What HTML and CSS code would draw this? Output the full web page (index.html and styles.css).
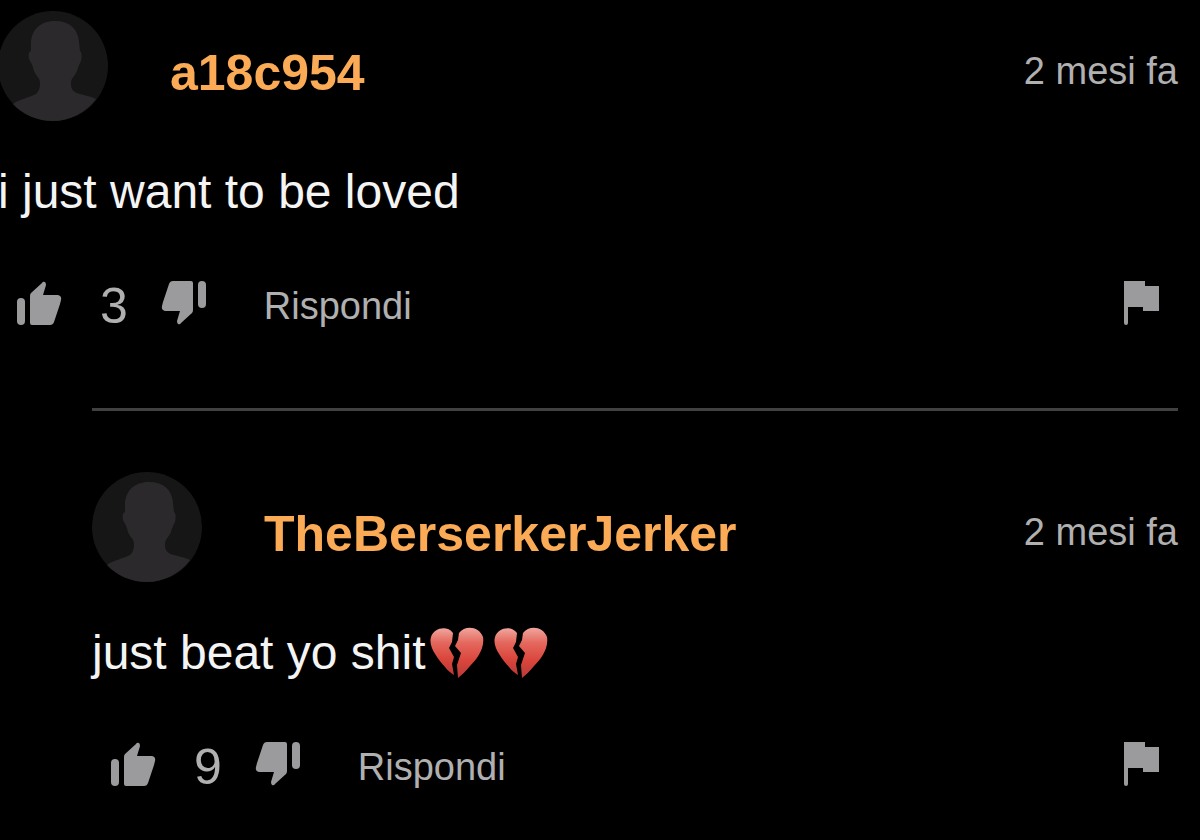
FILE: index.html
```html
<!DOCTYPE html>
<html lang="it">
<head>
    <meta charset="UTF-8">
    <meta name="viewport" content="width=device-width, initial-scale=1.0">
    <title>Commenti</title>
    <link rel="stylesheet" href="styles.css">
</head>
<body>
    <!-- Shared icons -->
    <svg class="sprite" aria-hidden="true">
        <defs>
            <symbol id="avatar" viewBox="0 0 110 110">
                <circle class="avatar-bg" cx="55" cy="55" r="55"/>
                <path class="avatar-figure" d="M57 10C42 10 34 19 33 31L33 40C30 41 30 46 32 50C34 53 35 56 36 60C38 65 42 67 42 72C42 77 41 80 38 83C31 87 21 88 15 93C25 104 40 110 55 110C71 110 88 102 98 88C92 85 84 84 79 82C74 80 73 77 73 72C73 67 77 65 79 60C80 56 81 54 83 50C84 46 84 41 82 40L81 31C80 18 72 10 57 10Z"/>
            </symbol>
            <symbol id="thumb" viewBox="0 0 46 46">
                <rect x="1" y="18" width="8" height="27" rx="4"/>
                <path d="M14 16Q14 14 15 13L26 3Q27 1 29 2Q30 3 30 5L27 15H42Q46 16 45 20L44 24L38 42Q37 45 34 45H16Q14 45 14 43Z"/>
            </symbol>
            <symbol id="flag" viewBox="0 0 36 46">
                <path d="M0 1H21V6H35V31H19V27H4V43Q4 45 2 45Q0 45 0 43Z"/>
            </symbol>
            <linearGradient id="heartFill" x1="0" y1="0" x2="0" y2="1">
                <stop offset="0" stop-color="#f0a69e"/>
                <stop offset="0.3" stop-color="#e4685e"/>
                <stop offset="0.65" stop-color="#da463c"/>
                <stop offset="1" stop-color="#b83a37"/>
            </linearGradient>
            <symbol id="heart" viewBox="0 0 54 52">
                <path fill="url(#heartFill)" d="M23 6C17-2 4 1 1 10C-2 20 8 32 15 40C18 44 21 46 24 48L22 37L24 30L19 21L22 15Z"/>
                <path fill="url(#heartFill)" d="M29 6C35-2 49-1 53 10C55 22 46 33 40 39C36 44 32 48 28 51L27 38L31 26L25 19L28 13Z"/>
            </symbol>
        </defs>
    </svg>

    <main class="thread">
        <article class="comment">
            <header class="comment-header">
                <svg class="avatar" aria-hidden="true"><use href="#avatar"/></svg>
                <a class="username" href="#">a18c954</a>
                <time class="date">2 mesi fa</time>
            </header>
            <p class="message">i just want to be loved</p>
            <div class="actions">
                <button type="button" aria-label="Mi piace"><svg class="icon"><use href="#thumb"/></svg></button>
                <span class="votes">3</span>
                <button type="button" aria-label="Non mi piace"><svg class="icon icon-down"><use href="#thumb"/></svg></button>
                <button type="button" class="reply-button">Rispondi</button>
                <button type="button" class="report" aria-label="Segnala"><svg class="icon icon-flag"><use href="#flag"/></svg></button>
            </div>
        </article>

        <article class="comment reply">
            <header class="comment-header">
                <svg class="avatar" aria-hidden="true"><use href="#avatar"/></svg>
                <a class="username" href="#">TheBerserkerJerker</a>
                <time class="date">2 mesi fa</time>
            </header>
            <p class="message">just beat yo shit<span class="hearts" role="img" aria-label="cuori spezzati"><svg class="heart"><use href="#heart"/></svg><svg class="heart"><use href="#heart"/></svg></span></p>
            <div class="actions">
                <button type="button" aria-label="Mi piace"><svg class="icon"><use href="#thumb"/></svg></button>
                <span class="votes">9</span>
                <button type="button" aria-label="Non mi piace"><svg class="icon icon-down"><use href="#thumb"/></svg></button>
                <button type="button" class="reply-button">Rispondi</button>
                <button type="button" class="report" aria-label="Segnala"><svg class="icon icon-flag"><use href="#flag"/></svg></button>
            </div>
        </article>
    </main>
</body>
</html>
```

FILE: styles.css
```css
:root {
    --background: #000000;
    --name: #fbab55;
    --text: #f4f4f4;
    --muted: #b0b0b0;
    --icon: #9b9b9d;
    --line: #414141;
}

body {
    margin: 0;
    background: var(--background);
    color: var(--text);
    font-family: "Liberation Sans", Arial, sans-serif;
}

.sprite {
    position: absolute;
    width: 0;
    height: 0;
}

/* Thread */
.thread {
    margin-left: -2px;
    padding: 11px 22px 0 0;
}

.reply {
    margin: 73px 0 0 94px;
    padding-top: 61px;
    border-top: 3px solid var(--line);
}

/* Comment header */
.comment-header {
    display: flex;
    align-items: center;
}

.avatar {
    flex: none;
    width: 110px;
    height: 110px;
}

.avatar-bg {
    fill: #161616;
}

.avatar-figure {
    fill: #2b292c;
}

.username {
    margin-left: 62px;
    padding-top: 14px;
    color: var(--name);
    font-size: 50px;
    font-weight: bold;
    line-height: 58px;
    text-decoration: none;
}

.date {
    margin-left: auto;
    padding-top: 10px;
    color: var(--muted);
    font-size: 38px;
    line-height: 44px;
}

/* Message */
.message {
    display: flex;
    align-items: center;
    margin: 43px 0 0;
    font-size: 48px;
    line-height: 56px;
}

.hearts {
    display: flex;
    gap: 10px;
    margin-left: 4px;
}

.heart {
    width: 54px;
    height: 52px;
}

/* Actions */
.actions {
    display: flex;
    align-items: center;
    height: 58px;
    margin-top: 57px;
    padding-left: 18px;
}

button {
    display: flex;
    padding: 0;
    border: none;
    background: none;
    color: var(--muted);
    font-family: inherit;
    cursor: pointer;
}

.icon {
    width: 46px;
    height: 46px;
    margin-bottom: 6px;
    fill: var(--icon);
}

.icon-down {
    transform: rotate(180deg);
}

.icon-flag {
    width: 36px;
}

.votes {
    margin: 0 33px 0 38px;
    color: var(--muted);
    font-size: 50px;
    line-height: 58px;
}

.reply-button {
    margin-left: 57px;
    font-size: 38px;
    line-height: 44px;
}

.report {
    margin-left: auto;
    margin-right: 18px;
}
```
